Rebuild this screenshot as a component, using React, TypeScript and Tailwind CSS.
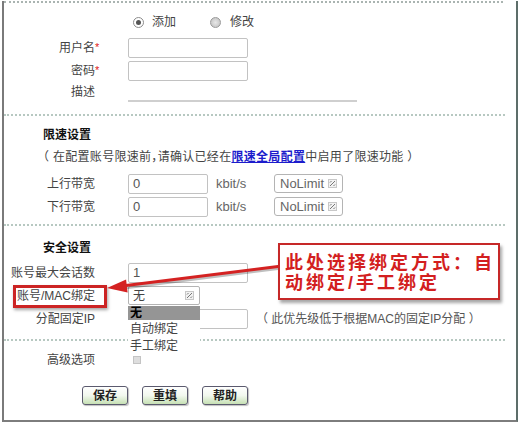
import React from "react";

function SelIcon() {
  return (
    <svg width="9" height="9" viewBox="0 0 9 9">
      <rect x="0.5" y="0.5" width="8" height="8" fill="#f2f2f2" stroke="#c8c8c8" />
      <path d="M2 7 L7 2 M2 3.5 L3.5 2 M5.5 7 L7 5.5" stroke="#777" strokeWidth="1" />
    </svg>
  );
}

function Input({ value, w }: { value?: string; w: "sm" | "lg" }) {
  return (
    <div
      className={
        (w === "sm" ? "w-[80px] " : "w-[120px] ") +
        "h-[20px] border border-[#c2c2c2] rounded-[2px] bg-white flex items-center pl-[4px] text-[13px] text-[#555]"
      }
    >
      {value}
    </div>
  );
}

function Label({ text, star }: { text: string; star?: boolean }) {
  return (
    <>
      <div className="w-[91px] text-right whitespace-nowrap text-[#444]">{text}</div>
      <div className="w-[6px] text-[#e02020] text-[11px] leading-none">{star ? "*" : ""}</div>
    </>
  );
}

function Sep() {
  return <div className="w-[501px] border-t-2 border-dotted border-[#b7c8c1]" />;
}

function Btn({ text }: { text: string }) {
  return (
    <div className="w-[46px] h-[19px] rounded-[3px] border-[1.5px] border-[#5b5a6e] bg-linear-to-b from-white via-[#f2f8ee] to-[#c6e0b4] flex items-center justify-center font-bold text-[12px] text-[#222] shadow-[1px_1px_1px_rgba(0,0,0,0.25)]">
      {text}
    </div>
  );
}

export default function App() {
  return (
    <div className="relative w-[519px] h-[423px] bg-white overflow-hidden pl-[2px] pt-[1px] font-['Liberation_Sans','Noto_Sans_CJK_SC',sans-serif] text-[12px] text-[#333] leading-none">
      <div className="w-[516px] h-[421px] border-l-2 border-r-2 border-b-2 border-solid border-l-[#7a7a7a] border-r-[#5d6e6a] border-b-[#7d7d7d] flex flex-col">
        <div className="w-[499px] border-t-2 border-dotted border-[#aab4b1]" />

        {/* radio row */}
        <div className="mt-[10px] h-[18px] flex items-center">
          <span className="ml-[129px] w-[11px] h-[11px] rounded-full border border-[#8c8c8c] bg-white flex items-center justify-center">
            <span className="w-[5px] h-[5px] rounded-full bg-[#555]" />
          </span>
          <span className="ml-[8px] text-[#444]">添加</span>
          <span className="ml-[34px] w-[11px] h-[11px] rounded-full border border-[#9a9a9a] bg-radial from-[#e8e8e8] to-[#bdbdbd]" />
          <span className="ml-[9px] text-[#444]">修改</span>
        </div>

        <div className="mt-[5px] h-[23px] flex items-center">
          <Label text="用户名" star />
          <div className="ml-[27px]"><Input w="lg" /></div>
        </div>
        <div className="h-[23px] flex items-center">
          <Label text="密码" star />
          <div className="ml-[27px]"><Input w="lg" /></div>
        </div>
        <div className="h-[20px] flex items-center">
          <Label text="描述" />
          <div className="ml-[27px] w-[229px] h-full border-b-2 border-[#cfcfcf]" />
        </div>

        <div className="mt-[12px]"><Sep /></div>

        <div className="mt-[10px] h-[18px] flex items-center pl-[39px] font-bold text-[#111]">限速设置</div>
        <div className="mt-[4px] h-[18px] flex items-center pl-[39px] text-[#444] whitespace-nowrap tracking-[0.3px] [font-feature-settings:'halt']">
          （ 在配置账号限速前，请确认已经在
          <span className="text-[#1c1ccc] underline font-bold">限速全局配置</span>
          中启用了限速功能 ）
        </div>

        <div className="mt-[6px] h-[23px] flex items-center">
          <Label text="上行带宽" />
          <div className="ml-[27px]"><Input w="sm" value="0" /></div>
          <span className="ml-[8px] w-[58px] text-[13px] text-[#666]">kbit/s</span>
          <div className="w-[69px] h-[19px] rounded-[3px] border border-[#b4b4b4] flex items-center justify-between pl-[5px] pr-[5px] text-[13px] text-[#666]">
            NoLimit <SelIcon />
          </div>
        </div>
        <div className="h-[23px] flex items-center">
          <Label text="下行带宽" />
          <div className="ml-[27px]"><Input w="sm" value="0" /></div>
          <span className="ml-[8px] w-[58px] text-[13px] text-[#666]">kbit/s</span>
          <div className="w-[69px] h-[19px] rounded-[3px] border border-[#b4b4b4] flex items-center justify-between pl-[5px] pr-[5px] text-[13px] text-[#666]">
            NoLimit <SelIcon />
          </div>
        </div>

        <div className="mt-[6px]"><Sep /></div>

        <div className="mt-[13px] h-[18px] flex items-center pl-[39px] font-bold text-[#111]">安全设置</div>

        <div className="mt-[4px] h-[23px] flex items-center">
          <Label text="账号最大会话数" />
          <div className="ml-[27px]"><Input w="lg" value="1" /></div>
        </div>
        <div className="h-[23px] flex items-center">
          <Label text="账号/MAC绑定" />
          <div className="ml-[27px] w-[72px] h-[19px] rounded-[2px] border border-[#b4b4b4] flex items-center justify-between pl-[4px] pr-[5px] text-[#444]">
            无 <SelIcon />
          </div>
        </div>
        <div className="h-[24px] flex items-center">
          <Label text="分配固定IP" />
          <div className="ml-[27px]"><Input w="lg" /></div>
          <span className="ml-[14px] text-[12px] text-[#555] whitespace-nowrap [font-feature-settings:'halt']">
            （ 此优先级低于根据MAC的固定IP分配 ）
          </span>
        </div>

        <div className="mt-[8px]"><Sep /></div>

        <div className="mt-[10px] h-[18px] flex items-center">
          <Label text="高级选项" />
          <span className="ml-[32px] w-[8px] h-[8px] border border-[#c4c4c4] bg-[#dedede]" />
        </div>

        <div className="mt-[17px] flex items-center pl-[78px] gap-[14px]">
          <Btn text="保存" />
          <Btn text="重填" />
          <Btn text="帮助" />
        </div>
      </div>

      {/* dropdown list */}
      <div className="absolute left-[128px] top-[306px] w-[72px] bg-white flex flex-col">
        <div className="h-[14px] bg-[#959595] text-[#000] font-bold pl-[2px] flex items-center">无</div>
        <div className="h-[17px] pl-[2px] flex items-center text-[#444]">自动绑定</div>
        <div className="h-[17px] pl-[2px] flex items-center text-[#444]">手工绑定</div>
      </div>

      {/* red highlight box */}
      <div className="absolute left-[13px] top-[285px] w-[94px] h-[23px] border-[3px] border-[#cc2424] shadow-[1px_2px_3px_rgba(0,0,0,0.35)]" />

      {/* arrow */}
      <svg className="absolute left-0 top-0 pointer-events-none" width="519" height="423">
        <line x1="282" y1="268" x2="124" y2="288" stroke="rgba(0,0,0,0.25)" strokeWidth="3" />
        <line x1="282" y1="266" x2="122" y2="286" stroke="#d42222" strokeWidth="3" />
        <polygon points="107,288 127.6,292.5 126.1,279.5" fill="#d42222" />
      </svg>

      {/* callout */}
      <div className="absolute left-[278px] top-[243px] w-[222px] h-[57px] border-2 border-[#c62828] bg-white shadow-[2px_3px_3px_rgba(0,0,0,0.35)] pl-[5px] pt-[8px] font-bold text-[18px] leading-[20px] tracking-[3px] text-[#d31f1f] whitespace-nowrap">
        此处选择绑定方式：自
        <br />
        动绑定/手工绑定
      </div>
    </div>
  );
}
